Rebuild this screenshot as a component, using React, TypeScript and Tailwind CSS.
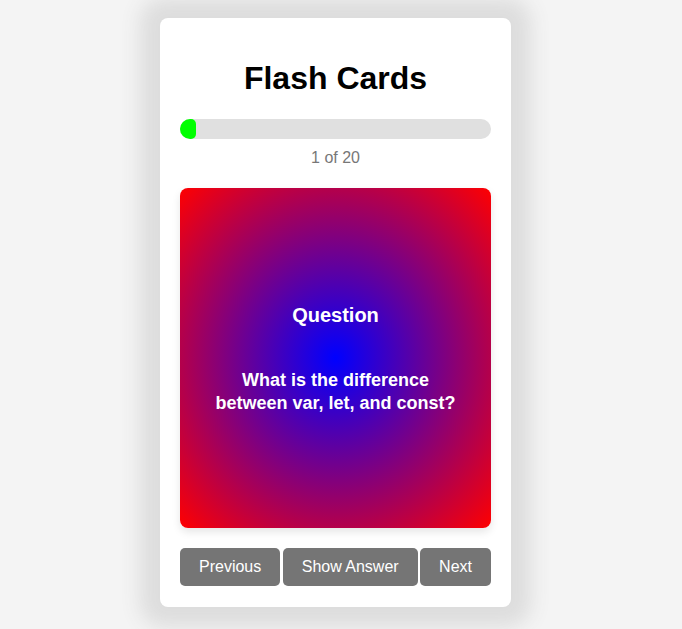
import React from "react";

export default function App() {
  return (
    <div className="min-h-[629px] w-full bg-[#f4f4f4] flex justify-center pr-[11px] pt-[18px]" style={{ fontFamily: '"Liberation Sans", Arial, sans-serif' }}>
      <div className="w-[351px] h-[589px] bg-white rounded-[8px] shadow-[0_0_20px_20px_#dddddd] px-5 pt-5 pb-[21px] flex flex-col">
        <h1 className="mt-[22px] mb-[22px] text-[32px] leading-[37px] font-bold text-black text-center">Flash Cards</h1>
        <div className="h-5 w-full rounded-full bg-[#e0e0e0] overflow-hidden">
          <div className="h-full bg-[#00ff00] rounded-[5px]" style={{ width: "5%" }} />
        </div>
        <div className="mt-[10px] text-[16px] leading-[18px] text-[#777777] text-center">1 of 20</div>
        <div
          className="mt-[21px] h-[340px] rounded-[8px] shadow-[0_4px_8px_rgba(0,0,0,0.1)] flex flex-col items-center justify-center gap-[42px] pt-[3px] px-[30px] text-white text-center"
          style={{ background: "radial-gradient(#0000ff, #ff0000)" }}
        >
          <h2 className="text-[20px] leading-[23px] font-bold">Question</h2>
          <p className="text-[18px] leading-[23px] font-bold">What is the difference between var, let, and const?</p>
        </div>
        <div className="mt-5 flex justify-between">
          <button className="shrink-0 whitespace-nowrap h-[38px] px-[19px] bg-[#757575] text-white text-[16px] rounded-[5px]">Previous</button>
          <button className="shrink-0 whitespace-nowrap h-[38px] px-[19px] bg-[#757575] text-white text-[16px] rounded-[5px]">Show Answer</button>
          <button className="shrink-0 whitespace-nowrap h-[38px] px-[19px] bg-[#757575] text-white text-[16px] rounded-[5px]">Next</button>
        </div>
      </div>
    </div>
  );
}
